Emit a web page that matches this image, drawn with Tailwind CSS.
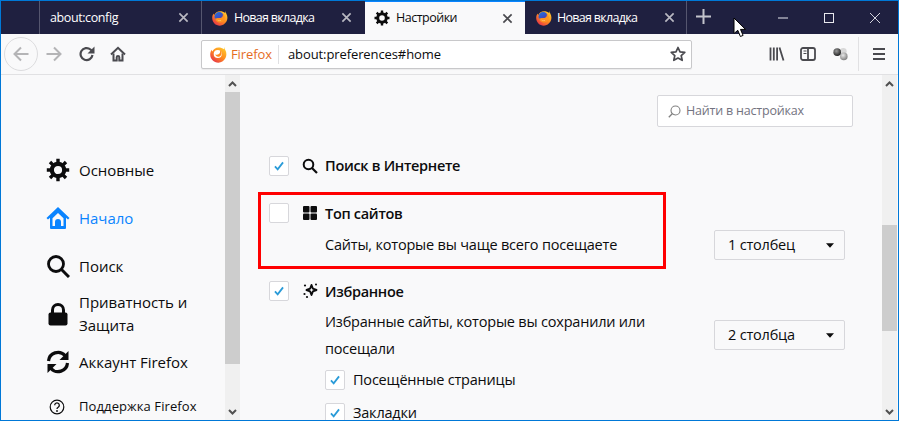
<!DOCTYPE html>
<html lang="ru"><head><meta charset="utf-8">
<script src="https://cdn.jsdelivr.net/npm/@tailwindcss/browser@4"></script>
<title>Настройки</title></head>
<body class="m-0 overflow-hidden">
<svg class="absolute w-0 h-0" aria-hidden="true"><defs>
<linearGradient id="ff" x1="0.9" y1="0" x2="0.1" y2="1"><stop offset="0" stop-color="#ffd02e"/><stop offset="0.5" stop-color="#ff8a1f"/><stop offset="1" stop-color="#e3264f"/></linearGradient>
<linearGradient id="ffb" x1="0.2" y1="0" x2="0.8" y2="1"><stop offset="0" stop-color="#1f6fe0"/><stop offset="1" stop-color="#5a2ea0"/></linearGradient>
<radialGradient id="s1" cx="0.4" cy="0.35" r="0.7"><stop offset="0" stop-color="#9a9a9a"/><stop offset="1" stop-color="#1c1c1c"/></radialGradient>
<radialGradient id="s2" cx="0.4" cy="0.35" r="0.7"><stop offset="0" stop-color="#e8e8e8"/><stop offset="1" stop-color="#7a7a7a"/></radialGradient>
<symbol id="fx" viewBox="0 0 16 16">
<path d="M13.200.8c.3 1 .4 1.600 1.200 3 1.400 2.600 1.300 5.400.2 7.500C13 14 10.600 15.700 7.900 15.700 3.600 15.700.2 12.300.2 8c0-1.600.5-3.200 1.400-4.400.1.700.3 1.100.6 1.500C3.200 3 5.300 1.300 8 1.300c2 0 3.700.6 5.200 1.700z" fill="url(#ff)"/>
<circle cx="7.200" cy="6.800" r="4.700" fill="url(#ffb)"/>
<path d="M3 8.400c.7 2.500 2.900 4.200 5.300 4 2.500-.2 4.400-2.200 4.400-4.600 0-1.800-.8-3.300-2.200-4.300.6 1.100.5 2.400-.2 3.300-.6.800-1.600 1.200-2.800 1.200-1 0-1.500.3-2 .1-.6.400-1.500.5-2.500.3z" fill="#ff9320"/>
<path d="M5.200 9.600c1 1 2.800 1.200 4 .4-.8 1.200-3 1.200-4-.4z" fill="#fff3c8"/>
</symbol>
<symbol id="x" viewBox="0 0 12 12"><path d="M1.500 1.500l9 9M10.500 1.500l-9 9" stroke="currentColor" stroke-width="1.800" fill="none"/></symbol>
<symbol id="check" viewBox="0 0 20 20"><path d="M5.500 10.500l3 3.200 6-7.700" stroke="#2a9bd8" stroke-width="2" fill="none"/></symbol>
</defs></svg>

<div class="relative w-[899px] h-[421px] overflow-hidden flex flex-col border border-[#0078d7] bg-[#f9f9fa] text-[#0c0c0d] font-['Open_Sans','Noto_Sans',sans-serif]">

  <!-- tab strip -->
  <div class="h-[33px] shrink-0 flex bg-[#1f2040] text-white text-[12.5px] tracking-[-0.5px]">
    <div class="w-[39px] border-r border-[#55566f]"></div>
    <div class="w-[162px] border-r border-[#55566f] flex items-center pl-[10px] pr-[12px]">
      <span class="flex-1 pt-px tracking-[-0.4px]">about:config</span>
      <svg class="w-[11px] h-[11px] text-[#b9b9c2]"><use href="#x"/></svg>
    </div>
    <div class="w-[163px] flex items-center pl-[10px] pr-[13px]">
      <svg class="w-[16px] h-[16px] mr-[6px]"><use href="#fx"/></svg>
      <span class="flex-1 pt-px tracking-[-0.7px]">Новая вкладка</span>
      <svg class="w-[11px] h-[11px] text-[#b9b9c2]"><use href="#x"/></svg>
    </div>
    <div class="w-[160px] flex items-center bg-[#f9f9fa] text-[#0c0c0d] pl-[9px] pr-[12px] border-t-2 border-[#0a84ff] -mt-px h-[34px]">
      <svg class="w-[16px] h-[16px] mr-[6px]" viewBox="0 0 16 16"><circle cx="8" cy="8" r="4.300" fill="none" stroke="#0c0c0d" stroke-width="3"/><path d="M8 .5v3M8 12.500v3M.5 8h3M12.500 8h3M2.700 2.700l2.100 2.100M11.200 11.200l2.100 2.100M13.300 2.700l-2.100 2.100M4.800 11.200l-2.100 2.100" stroke="#0c0c0d" stroke-width="2.400"/></svg>
      <span class="flex-1">Настройки</span>
      <svg class="w-[11px] h-[11px] text-[#4a4a4f]"><use href="#x"/></svg>
    </div>
    <div class="w-[162px] border-r border-[#55566f] flex items-center pl-[11px] pr-[11px]">
      <svg class="w-[16px] h-[16px] mr-[5px]"><use href="#fx"/></svg>
      <span class="flex-1 pt-px tracking-[-0.7px]">Новая вкладка</span>
      <svg class="w-[11px] h-[11px] text-[#b9b9c2]"><use href="#x"/></svg>
    </div>
    <div class="flex-1 flex items-center pl-[9px]">
      <svg class="w-[15px] h-[15px] -mt-[2px]" viewBox="0 0 15 15"><path d="M7.500 0v15M0 7.500h15" stroke="#c3c3cc" stroke-width="2"/></svg>
      <div class="flex-1"></div>
      <svg class="w-[10px] h-[10px] mr-[36px]" viewBox="0 0 10 10"><path d="M0 5h10" stroke="#e8e8ee"/></svg>
      <svg class="w-[10px] h-[10px] mr-[36px]" viewBox="0 0 10 10"><rect x=".5" y=".5" width="9" height="9" fill="none" stroke="#e8e8ee"/></svg>
      <svg class="w-[10px] h-[10px] mr-[18px]" viewBox="0 0 10 10"><path d="M0 0l10 10M10 0l-10 10" stroke="#e8e8ee" stroke-width=".9"/></svg>
    </div>
  </div>

  <!-- toolbar -->
  <div class="h-[41px] shrink-0 flex items-center border-b border-[#e1e1e3] bg-[#f9f9fa] text-[#4a4a4f]">
    <div class="w-[34px] h-[34px] ml-[3px] rounded-full border border-[#dcdcde] flex items-center justify-center">
      <svg class="w-[16px] h-[16px]" viewBox="0 0 16 16"><path d="M15.500 8H2M8 1.500L1.500 8 8 14.500" fill="none" stroke="#b4b4b6" stroke-width="2"/></svg>
    </div>
    <svg class="w-[16px] h-[16px] ml-[8px]" viewBox="0 0 16 16"><path d="M.5 8H14M8 1.500L14.500 8 8 14.500" fill="none" stroke="#b4b4b6" stroke-width="2"/></svg>
    <svg class="w-[16px] h-[16px] ml-[17px]" viewBox="0 0 16 16"><path d="M13.500 9A6 6 0 1 1 11.500 3.500L13.500 5.300" fill="none" stroke="#4a4a4f" stroke-width="2.200"/><path d="M15.500 .5V7.500H8.500z" fill="#4a4a4f"/></svg>
    <svg class="w-[16px] h-[16px] ml-[15px]" viewBox="0 0 16 16"><path d="M1 8.500L8 1.800l7 6.700" fill="none" stroke="#4a4a4f" stroke-width="2"/><path d="M3.500 7.500V14.500h3.200v-3.200a1.300 1.300 0 0 1 2.600 0v3.200h3.200V7.500" fill="none" stroke="#4a4a4f" stroke-width="2"/></svg>
    <div class="w-[491px] h-[29px] ml-[75px] bg-white border border-[#c8c8ca] rounded-[2px] flex items-center text-[13px] shadow-[0_1px_1px_rgba(0,0,0,0.06)]">
      <svg class="w-[17px] h-[17px] ml-[8px] mr-[4px]" viewBox="0 0 16 16"><path d="M13.200.8c.3 1 .4 1.600 1.200 3 1.400 2.600 1.300 5.400.2 7.500C13 14 10.600 15.700 7.900 15.700 3.600 15.700.2 12.300.2 8c0-1.600.5-3.200 1.400-4.400.1.700.3 1.100.6 1.500C3.200 3 5.300 1.300 8 1.300c2 0 3.700.6 5.200 1.700z" fill="url(#ff)"/><circle cx="7.300" cy="7.500" r="3.800" fill="#fff"/><path d="M9 3.500c1.200 1.500.5 4-1.500 4.600-1 .3-2 0-2.600-.4.300 1.500 1.500 2.500 3 2.400 2.200-.1 3.500-2.500 2.800-4.500-.3-.8-1-1.700-1.700-2.100z" fill="#ff8a1f"/></svg>
      <span class="text-[#e56d1f] w-[47px] tracking-[-0.1px] pt-[2px]">Firefox</span>
      <div class="w-px h-[19px] bg-[#e0e0e2]"></div>
      <span class="ml-[9px] flex-1 text-[#0c0c0d] tracking-[-0.1px] pt-[2px]">about:preferences#home</span>
      <svg class="w-[16px] h-[16px] mr-[5px]" viewBox="0 0 16 16"><path d="M8 1.500l2 4.400 4.800.5-3.600 3.200 1 4.700L8 12l-4.200 2.300 1-4.700L1.200 6.400 6 5.900z" fill="none" stroke="#4a4a4f" stroke-width="1.700" stroke-linejoin="round"/></svg>
    </div>
    <svg class="w-[16px] h-[16px] ml-[77px]" viewBox="0 0 16 16"><path d="M1.500 1.500v13M4.800 1.500v13M8.100 1.500v13M10.500 1.500l4 13" stroke="#4a4a4f" stroke-width="1.800" fill="none"/></svg>
    <svg class="w-[16px] h-[16px] ml-[15px]" viewBox="0 0 16 16"><rect x="1" y="2" width="14" height="12" rx="2" fill="none" stroke="#4a4a4f" stroke-width="1.800"/><path d="M8 2v12" stroke="#4a4a4f" stroke-width="1.800"/><path d="M3.500 5h3M3.500 7.500h3" stroke="#4a4a4f"/></svg>
    <svg class="w-[17px] h-[17px] ml-[16px]" viewBox="0 0 18 18"><circle cx="12" cy="5.500" r="3.500" fill="#d8d8d8"/><circle cx="12.500" cy="11" r="4" fill="url(#s2)"/><circle cx="5.500" cy="6.500" r="4" fill="url(#s1)"/></svg>
    <div class="w-px h-[34px] bg-[#e1e1e3] ml-[9px]"></div>
    <svg class="w-[14px] h-[14px] ml-[13px]" viewBox="0 0 14 14"><path d="M1 2h12M1 7h12M1 12h12" stroke="#4a4a4f" stroke-width="1.800"/></svg>
  </div>

  <!-- content -->
  <div class="flex-1 flex min-h-0 mr-px text-[14.5px] tracking-[-0.2px]">
    <!-- sidebar -->
    <nav class="w-[224px] shrink-0 pt-[71px] pl-[45px] tracking-[-0.03px]">
      <div class="h-[48px] flex items-center gap-[9px]">
        <svg class="w-[24px] h-[24px]" viewBox="0 0 24 24"><circle cx="12" cy="12" r="6.200" fill="none" stroke="#0c0c0d" stroke-width="4.200"/><path d="M12 .8v4M12 19.200v4M.8 12h4M19.200 12h4M4 4l2.900 2.900M17.100 17.100L20 20M20 4l-2.900 2.900M6.900 17.100L4 20" stroke="#0c0c0d" stroke-width="3.400"/></svg>
        <span class="text-[15px]">Основные</span>
      </div>
      <div class="h-[48px] flex items-center gap-[9px] text-[#0a84ff]">
        <svg class="w-[24px] h-[24px]" viewBox="0 0 24 24"><path d="M12 1L.5 12l1.500 1.500 2-1.700V22a1 1 0 0 0 1 1h14a1 1 0 0 0 1-1V11.800l2 1.700 1.500-1.500z" fill="#0a84ff"/><path d="M12 7l5.500 5.200V20H6.500v-7.800z" fill="#f9f9fa"/><path d="M9 20.500v-4.500a3 3 0 0 1 6 0v4.500z" fill="#0a84ff"/></svg>
        <span class="text-[15px]">Начало</span>
      </div>
      <div class="h-[48px] flex items-center gap-[9px]">
        <svg class="w-[24px] h-[24px]" viewBox="0 0 24 24"><circle cx="10" cy="10" r="7.500" fill="none" stroke="#0c0c0d" stroke-width="2.800"/><path d="M15.500 15.500L23 23" stroke="#0c0c0d" stroke-width="3"/></svg>
        <span class="text-[15px]">Поиск</span>
      </div>
      <div class="h-[48px] flex items-center gap-[9px]">
        <svg class="w-[24px] h-[24px]" viewBox="0 0 24 24"><path d="M6.500 11V8a5.500 5.500 0 0 1 11 0v3" fill="none" stroke="#0c0c0d" stroke-width="3"/><rect x="2.500" y="10.500" width="19" height="13" rx="2" fill="#0c0c0d"/></svg>
        <span class="text-[15px] leading-[23px]">Приватность и<br>Защита</span>
      </div>
      <div class="h-[48px] flex items-center gap-[9px]">
        <svg class="w-[24px] h-[24px]" viewBox="0 0 24 24"><path d="M2.500 11A9.500 9.500 0 0 1 19 5.500L21 7.500" fill="none" stroke="#0c0c0d" stroke-width="3.200"/><path d="M22.500 1v9h-9z" fill="#0c0c0d"/><path d="M21.500 13A9.500 9.500 0 0 1 5 18.500L3 16.500" fill="none" stroke="#0c0c0d" stroke-width="3.200"/><path d="M1.500 23v-9h9z" fill="#0c0c0d"/></svg>
        <span class="text-[15px]">Аккаунт Firefox</span>
      </div>
      <div class="h-[22px] mt-[10px] flex items-center text-[13px] tracking-[0.1px]">
        <svg class="w-[16px] h-[16px] ml-[3px] mr-[14px]" viewBox="0 0 16 16"><circle cx="8" cy="8" r="6.800" fill="none" stroke="#0c0c0d" stroke-width="1.200"/><path d="M5.700 6.200a2.300 2.300 0 1 1 3.500 2c-.8.500-1.200.8-1.200 1.800" fill="none" stroke="#0c0c0d" stroke-width="1.300"/><circle cx="8" cy="12" r=".9" fill="#0c0c0d"/></svg>
        <span>Поддержка Firefox</span>
      </div>
    </nav>
    <!-- sidebar scrollbar -->
    <div class="w-[15px] shrink-0 bg-[#f0f0f0] flex flex-col">
      <div class="h-[17px] flex items-center justify-center"><svg class="w-[9px] h-[6px]" viewBox="0 0 9 6"><path d="M1 5l3.500-3.500L8 5" fill="none" stroke="#505050" stroke-width="2"/></svg></div>
      <div class="h-[272px] bg-[#cdcdcd]"></div>
      <div class="flex-1"></div>
      <div class="h-[17px] flex items-center justify-center"><svg class="w-[9px] h-[6px]" viewBox="0 0 9 6"><path d="M1 1l3.500 3.500L8 1" fill="none" stroke="#505050" stroke-width="2"/></svg></div>
    </div>

    <!-- main -->
    <main class="flex-1 min-w-0 pt-[20px] pl-[29px] pr-[37px] overflow-hidden">
      <div class="flex justify-end mr-[-8px]">
        <div class="w-[196px] h-[32px] bg-white border border-[#d7d7db] rounded-[2px] flex items-center pl-[10px] text-[12.5px] text-[#737380]">
          <svg class="w-[13px] h-[13px] mr-[5px]" viewBox="0 0 13 13"><circle cx="7.500" cy="5.500" r="4.500" fill="none" stroke="#808080" stroke-width="1.100"/><path d="M4.200 8.800L.8 12.200" stroke="#808080" stroke-width="1.300"/></svg>
          Найти в настройках
        </div>
      </div>

      <div class="mt-[29px] h-[20px] flex items-center">
        <div class="w-[20px] h-[20px] bg-white border border-[#d7d7db] rounded-[2px] shrink-0"><svg class="w-[18px] h-[18px]"><use href="#check"/></svg></div>
        <svg class="w-[16px] h-[16px] ml-[13px] mr-[7px]" viewBox="0 0 16 16"><circle cx="6.500" cy="6.500" r="4.800" fill="none" stroke="#0c0c0d" stroke-width="2"/><path d="M10 10l5 5" stroke="#0c0c0d" stroke-width="2.200"/></svg>
        <span class="font-semibold tracking-[-0.3px]">Поиск в Интернете</span>
      </div>

      <div class="mt-[27px] h-[20px] flex items-center">
        <div class="w-[20px] h-[20px] bg-white border border-[#d7d7db] rounded-[2px] shrink-0"></div>
        <svg class="w-[16px] h-[16px] ml-[13px] mr-[7px]" viewBox="0 0 16 16"><rect x="1" y="1" width="6.500" height="6.500" rx="1" fill="#0c0c0d"/><rect x="8.500" y="1" width="6.500" height="6.500" rx="1" fill="#0c0c0d"/><rect x="1" y="8.500" width="6.500" height="6.500" rx="1" fill="#0c0c0d"/><rect x="8.500" y="8.500" width="6.500" height="6.500" rx="1" fill="#0c0c0d"/></svg>
        <span class="font-semibold tracking-[-0.3px] pt-[2px]">Топ сайтов</span>
      </div>
      <div class="mt-[7px] h-[30px] flex items-center justify-between pl-[56px]">
        <span>Сайты, которые вы чаще всего посещаете</span>
        <div class="w-[131px] h-[30px] border border-[#d7d7db] rounded-[2px] bg-[#f9f9fa] flex items-center pl-[13px] pr-[10px]">
          <span class="flex-1">1 столбец</span>
          <svg class="w-[8px] h-[5px]" viewBox="0 0 9 5"><path d="M0 0h9L4.500 5z" fill="#0c0c0d"/></svg>
        </div>
      </div>

      <div class="mt-[21px] h-[20px] flex items-center">
        <div class="w-[20px] h-[20px] bg-white border border-[#d7d7db] rounded-[2px] shrink-0"><svg class="w-[18px] h-[18px]"><use href="#check"/></svg></div>
        <svg class="w-[16px] h-[16px] ml-[13px] mr-[7px]" viewBox="0 0 16 16"><path d="M9.500 2l1.400 3.600L14.500 7l-3.600 1.400L9.500 12 8.100 8.400 4.500 7l3.600-1.400z" fill="none" stroke="#0c0c0d" stroke-width="1.900" stroke-linejoin="round"/><circle cx="3" cy="2.500" r="1.100" fill="#0c0c0d"/><circle cx="2.500" cy="11" r="1.100" fill="#0c0c0d"/><circle cx="5" cy="14" r="1.100" fill="#0c0c0d"/><circle cx="14" cy="1.500" r="1" fill="#0c0c0d"/></svg>
        <span class="font-semibold tracking-[-0.3px] pt-[2px]">Избранное</span>
      </div>
      <div class="mt-[7px] flex items-start justify-between pl-[56px]">
        <p class="w-[345px] leading-[27px]">Избранные сайты, которые вы сохранили или посещали</p>
        <div class="mt-[12px] w-[131px] h-[30px] border border-[#d7d7db] rounded-[2px] bg-[#f9f9fa] flex items-center pl-[13px] pr-[10px]">
          <span class="flex-1">2 столбца</span>
          <svg class="w-[8px] h-[5px]" viewBox="0 0 9 5"><path d="M0 0h9L4.500 5z" fill="#0c0c0d"/></svg>
        </div>
      </div>
      <div class="mt-[8px] pl-[56px] h-[20px] flex items-center">
        <div class="w-[20px] h-[20px] bg-white border border-[#d7d7db] rounded-[2px] shrink-0"><svg class="w-[18px] h-[18px]"><use href="#check"/></svg></div>
        <span class="ml-[8px]">Посещённые страницы</span>
      </div>
      <div class="mt-[13px] pl-[56px] h-[20px] flex items-center">
        <div class="w-[20px] h-[20px] bg-white border border-[#d7d7db] rounded-[2px] shrink-0"><svg class="w-[18px] h-[18px]"><use href="#check"/></svg></div>
        <span class="ml-[8px]">Закладки</span>
      </div>
    </main>

    <!-- main scrollbar -->
    <div class="w-[15px] shrink-0 bg-[#f0f0f0] flex flex-col">
      <div class="h-[17px] flex items-center justify-center"><svg class="w-[9px] h-[6px]" viewBox="0 0 9 6"><path d="M1 5l3.500-3.500L8 5" fill="none" stroke="#505050" stroke-width="2"/></svg></div>
      <div class="h-[133px]"></div>
      <div class="h-[106px] bg-[#cdcdcd]"></div>
      <div class="flex-1"></div>
      <div class="h-[17px] flex items-center justify-center"><svg class="w-[9px] h-[6px]" viewBox="0 0 9 6"><path d="M1 1l3.500 3.500L8 1" fill="none" stroke="#505050" stroke-width="2"/></svg></div>
    </div>
  </div>

  <!-- red annotation frame -->
  <div class="absolute left-[257px] top-[191px] w-[408px] h-[77px] border-[3px] border-[#ff0000]"></div>
  <!-- mouse cursor -->
  <svg class="absolute left-[732px] top-[16px] w-[14px] h-[21px]" viewBox="0 0 14 21"><path d="M1 1v15.500l3.800-3.200 2.600 6.200 2.700-1.100-2.600-6h5z" fill="#fff" stroke="#000"/></svg>
</div>
</body></html>
